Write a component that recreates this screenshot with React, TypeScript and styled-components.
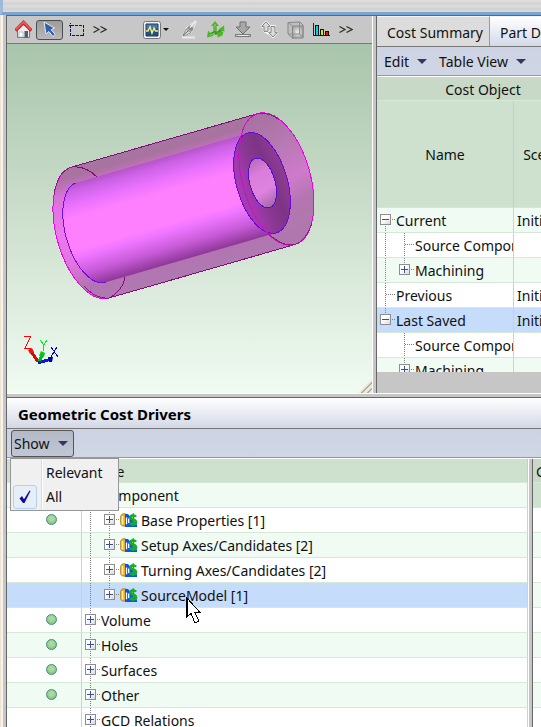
import React from "react";
import styled, { createGlobalStyle, css } from "styled-components";

const GlobalStyle = createGlobalStyle`
  * { box-sizing: border-box; }
  body { margin: 0; overflow: hidden; background: #fff; }
  body, button, table { font-family: "Noto Sans", "Open Sans", sans-serif; font-size: 14px; line-height: 20px; color: #111; }
  button { margin: 0; padding: 0; border: 0; background: none; cursor: default; }
  svg { display: block; flex: none; }
`;

/* ---------- window frame ---------- */

const Shell = styled.div`
  display: flex;
  flex-direction: column;
  height: 100vh;
  overflow: hidden;
`;

const TitleBand = styled.div`
  flex: none;
  height: 15px;
  border-left: 3px solid #9dbadd;
  border-bottom: 3px solid #7ba3d3;
  background: linear-gradient(#e0e0e0, #d3d3d3 30%, #dcdcdc 50%, #d2d2d2 75%, #dadada);
`;

const Body = styled.div`
  flex: 1;
  display: flex;
  min-height: 0;
`;

const LeftEdge = styled.div`
  flex: none;
  width: 7px;
  border-right: 1px solid #666;
  background: linear-gradient(90deg, #efe4cb 0 1px, #f4f4f4 1px 3px, #c6c6c6 3px 6px);
`;

const Main = styled.main`
  flex: 1;
  min-width: 0;
  display: flex;
  flex-direction: column;
  border-top: 1px solid #666;
`;

const TopSplit = styled.div`
  flex: none;
  display: grid;
  grid-template-columns: minmax(0, 365fr) 5px minmax(0, 164fr);
`;

const BottomSplit = styled.div`
  flex: 1;
  min-height: 0;
  overflow: hidden;
  display: grid;
  grid-template-columns: minmax(0, 521fr) 5px minmax(0, 8fr);
`;

const VerticalSplitter = styled.div`
  border-left: 1px solid #fff;
  border-right: 1px solid #666;
  background: #c6c6c6;
`;

const HorizontalSplitter = styled.div`
  flex: none;
  height: 5px;
  border-top: 1px solid #fff;
  border-bottom: 1px solid #666;
  background: #c6c6c6;
`;

const Pane = styled.section`
  min-width: 0;
  display: flex;
  flex-direction: column;
`;

/* ---------- model view ---------- */

const IconBar = styled.div`
  display: flex;
  align-items: center;
  height: 28px;
  padding: 0 8px;
  border-bottom: 1px solid #777;
  background: #c7c7c7;
`;

const IconButton = styled.button<{ $gap?: number; $pressed?: boolean }>`
  display: flex;
  align-items: center;
  justify-content: center;
  height: 20px;
  margin-left: ${(p) => p.$gap ?? 9}px;
  ${(p) =>
    p.$pressed &&
    css`
      width: 27px;
      border: 1px solid #4d4d4d;
      border-radius: 3px;
      background: linear-gradient(#9c9c9c, #b8b8b8);
    `}
`;

const Viewport = styled.div`
  position: relative;
  height: 349px;
  background: linear-gradient(#a9c5ab, #cddfcd 50%, #f0fbf2);
`;

const Scene = styled.svg`
  width: 365px;
  height: 349px;
`;

const Grip = styled.div`
  position: absolute;
  right: 0;
  bottom: 0;
  width: 14px;
  height: 14px;
  background: repeating-linear-gradient(135deg, #b3ada0 0 1px, #ece9dc 1px 4px);
  clip-path: polygon(100% 0, 100% 100%, 0 100%);
`;

/* ---------- tabs, menus, headings ---------- */

const Tabs = styled.div`
  display: flex;
  height: 31px;
  overflow: hidden;
  border-bottom: 1px solid #777;
`;

const Tab = styled.button<{ $selected?: boolean }>`
  flex: none;
  padding: 3px 6px 0 10px;
  white-space: nowrap;
  border-top: 1px solid #f4f4f4;
  border-right: 1px solid #999;
  background: ${(p) => (p.$selected ? "#dcdcdc" : "linear-gradient(#fff, #d3d9e7)")};
`;

const MenuBar = styled.div`
  position: relative;
  flex: none;
  display: flex;
  align-items: center;
  gap: 12px;
  height: 30px;
  padding: 0 7px;
  border-bottom: 1px solid #fff;
  box-shadow: inset 0 -1px #999;
  background: linear-gradient(#cdd3e2, #cfd6e4);
`;

const MenuButton = styled.button`
  display: flex;
  align-items: center;
  gap: 8px;
  white-space: nowrap;
`;

const ShowBar = styled(MenuBar)`
  padding: 0 4px;
`;

const ShowButton = styled(MenuButton)`
  height: 27px;
  padding: 0 5px 0 2px;
  border: 1px solid #555;
  border-radius: 3px;
  background: linear-gradient(#b4b9c6, #c0c6d4);
`;

const Popup = styled.div`
  position: absolute;
  z-index: 2;
  top: 29px;
  left: 3px;
  width: 109px;
  padding: 2px 2px 1px;
  border: 1px solid #979797;
  background: linear-gradient(90deg, #f0f0f0 30px, #dcdcdc 30px 31px, #fff 31px 32px, #f0f0f0 32px);
`;

const PopupItem = styled.button`
  display: grid;
  grid-template-columns: 24px 1fr;
  column-gap: 9px;
  align-items: center;
  width: 100%;
  height: 24px;
  text-align: left;
`;

const CheckSlot = styled.span<{ $on?: boolean }>`
  display: flex;
  align-items: center;
  justify-content: center;
  height: 24px;
  border: 1px solid ${(p) => (p.$on ? "#b0d0f5" : "transparent")};
  border-radius: 3px;
  background: ${(p) => (p.$on ? "#e6eff8" : "transparent")};
`;

const Heading = styled.h2`
  flex: none;
  height: 31px;
  margin: 0;
  padding: 6px 11px 0;
  overflow: hidden;
  white-space: nowrap;
  font-size: 15px;
  line-height: 20px;
  color: #000;
  border-bottom: 1px solid #777;
  background: linear-gradient(#fff, #d2d8e5);
`;

/* ---------- tables ---------- */

const TableArea = styled.div<{ $height?: number }>`
  ${(p) => (p.$height ? `height: ${p.$height}px;` : "flex: 1;")}
  overflow: hidden;
`;

const EmptyStrip = styled.div`
  flex: 1;
  background: #c6c6c6;
`;

const Grid = styled.table<{ $width?: number }>`
  width: ${(p) => (p.$width ? `${p.$width}px` : "100%")};
  table-layout: fixed;
  border-collapse: separate;
  border-spacing: 0;
`;

const HeadCell = styled.th<{ $height: number; $align?: string; $group?: boolean }>`
  height: ${(p) => p.$height}px;
  padding: 2px 3px 0;
  overflow: hidden;
  font-weight: 400;
  text-align: ${(p) => p.$align ?? "center"};
  border-right: 1px solid #bdd2bf;
  border-bottom: 1px solid #d5e8d6;
  background: ${(p) => (p.$group ? "#c9d9c8" : "#cde1ce")};
`;

const Row = styled.tr<{ $selected?: boolean; $striped?: boolean }>`
  background: ${(p) => (p.$selected ? "#c6dcfb" : p.$striped ? "#f0fbf3" : "#fff")};
`;

const Cell = styled.td`
  height: 25px;
  padding: 0;
  overflow: hidden;
  white-space: nowrap;
  border-right: 1px solid #c3d8c6;
  border-bottom: 1px solid #d5ead6;
`;

const ValueText = styled.span`
  display: block;
  height: 24px;
  padding-left: 3px;
  line-height: 26px;
`;

const TreeLine = styled.div`
  display: flex;
  height: 24px;
  line-height: 26px;
`;

const dotsDown = "repeating-linear-gradient(#808080 0 1px, transparent 1px 2px)";
const dotsAcross = "repeating-linear-gradient(90deg, #808080 0 1px, transparent 1px 2px)";

const Guide = styled.span<{ $up?: boolean; $down?: boolean; $across?: boolean }>`
  flex: none;
  width: 19px;
  height: 24px;
  padding: 6px 0 0 3px;
  background-repeat: no-repeat;
  background-image: ${dotsDown}, ${dotsDown}, ${dotsAcross};
  background-position: 8px 0, 8px 12px, 9px 11px;
  background-size: ${(p) => (p.$up ? "1px 12px" : "0 0")}, ${(p) => (p.$down ? "1px 12px" : "0 0")},
    ${(p) => (p.$across ? "9px 1px" : "0 0")};
`;

const Toggle = styled.button`
  display: flex;
  align-items: center;
  justify-content: center;
  width: 11px;
  height: 11px;
  border: 1px solid #8e8e8e;
  background: linear-gradient(135deg, #fff 40%, #d9d9d9);
`;

const DriverSlot = styled.span`
  width: 21px;
  padding-top: 5px;
`;

const StatusDot = styled.span`
  display: block;
  width: 11px;
  height: 11px;
  margin: 0 auto 2px 39px;
  border: 1px solid #449069;
  border-radius: 50%;
  background: radial-gradient(circle at 50% 40%, #a9d8a0 30%, #6bb583);
`;

const Pointer = styled.svg`
  position: absolute;
  z-index: 3;
  left: 185px;
  top: 596px;
`;

/* ---------- icons ---------- */

const Caret = ({ w = 10, color = "#3a3560" }: { w?: number; color?: string }) => (
  <svg width={w} height={w / 2} viewBox="0 0 10 5">
    <path d="M0 0h10L5 5z" fill={color} />
  </svg>
);

const Chevrons = () => (
  <svg width="14" height="9" viewBox="0 0 14 9" fill="none" stroke="#2a2a2a" strokeWidth="1.2">
    <path d="M.5 1.500l5.500 3L.5 7.500M7.500 1.500l5.500 3-5.500 3" />
  </svg>
);

const HomeIcon = () => (
  <svg width="17" height="19" viewBox="0 0 17 19">
    <path d="M2.500 9v8.500h12V9L8.500 4z" fill="#eee" stroke="#777" />
    <path d="M4 12h4v5H4z" fill="#fff" stroke="#aaa" strokeWidth=".7" />
    <path d="M9.500 11h3.500v6.500H9.500z" fill="#555b70" />
    <path d="M.6 10.500L8.500 2.500l7.900 8" fill="none" stroke="#c92027" strokeWidth="3.400" />
    <path d="M1 9.500L8.500 2l7.500 7.500" fill="none" stroke="#f35558" strokeWidth="1.800" />
  </svg>
);

const ArrowIcon = () => (
  <svg width="15" height="17" viewBox="0 0 15 17">
    <path d="M2 1l10.500 6-3.300 1.700 4 4.800-2.400 2-3.900-5L4 13z" fill="#2e62ae" stroke="#f2eadf" strokeWidth="1" />
  </svg>
);

const MarqueeIcon = () => (
  <svg width="15" height="14" viewBox="0 0 15 14" shapeRendering="crispEdges">
    <path d="M1.500 2.500h13v10h-13z" fill="none" stroke="#10106c" strokeDasharray="3 1" />
    <path d="M0 2.500h4M1.500 0v4" stroke="#10106c" strokeDasharray="1 1" />
  </svg>
);

const MonitorIcon = () => (
  <svg width="18" height="18" viewBox="0 0 18 18">
    <rect x=".5" y=".5" width="17" height="17" rx="2" fill="#f4f2ee" stroke="#777" />
    <path d="M3 3h12v12H3z" fill="#225083" stroke="#173a66" />
    <path d="M3.500 3.500h11v5c-4-2-7-2-11 1z" fill="#4478a8" />
    <path d="M3 10h2l2-4 2 6 2-5 1.500 3H15" fill="none" stroke="#f5ee83" strokeWidth="1.500" />
  </svg>
);

const PenIcon = () => (
  <svg width="16" height="19" viewBox="0 0 16 19">
    <path d="M1 17.500h13" stroke="#e9e9e9" strokeWidth="2" />
    <path d="M1.500 15.500L5 8 14.500.7 15.300 2 11 12l-6.500 3.500z" fill="#c4c4c4" stroke="#f2f2f2" strokeWidth=".8" />
    <path d="M2 15.500l3-6.500 5 3.500-5 2.700z" fill="#d9d9d9" stroke="#808080" strokeWidth=".8" />
    <path d="M2 15.500l5.500-5" stroke="#666" />
    <path d="M6 8l5 3.700 1.500-3.500L9 5z" fill="#8a8a8a" />
    <path d="M9 7.500L14.500 1.500" stroke="#eee" strokeWidth="1.500" />
  </svg>
);

const AxesIcon = () => (
  <svg width="19" height="18" viewBox="0 0 19 18">
    <path d="M9 11V3M9 11l-6 3.500M9 12.500c3 0 5-2 7-5" fill="none" stroke="#389a1e" strokeWidth="3" />
    <path d="M9 0l4 5H5zM1 16.500l1-7 5.500 5.500zM18 4.500l.5 6-6-2zM7 12l4.500-1v5.500l5-2 1-4" fill="#4fb52a" />
    <path d="M9 10V3M8.500 12L4 14.500" stroke="#84da58" strokeWidth="1" />
  </svg>
);

const DownloadIcon = () => (
  <svg width="18" height="17" viewBox="0 0 18 17">
    <path d="M6 1h6v5h4l-7 7-7-7h4z" fill="#a8a8a8" stroke="#707070" />
    <path d="M1.500 13.500h15v2h-15z" fill="#c9c9c9" stroke="#777" />
    <path d="M4 14.500h10" stroke="#eee" />
  </svg>
);

const SwapIcon = () => (
  <svg width="17" height="17" viewBox="0 0 17 17" fill="#dadada" strokeLinejoin="round">
    <path d="M5 .8l4.300 4.600H7v5H9.500L7.500 12.500 3 10V5.400H.8z" stroke="#f8f8f8" strokeWidth="2.200" />
    <path d="M5 .8l4.300 4.600H7v5H3v-5H.8z" stroke="#838383" />
    <path d="M12 16l-4.300-4.600H10V5h4v6.400h2.300z" stroke="#f8f8f8" strokeWidth="2" />
    <path d="M12 16l-4.300-4.600H10V5.500h4v5.900h2.300z" stroke="#838383" />
  </svg>
);

const CubeIcon = () => (
  <svg width="17" height="18" viewBox="0 0 17 18">
    <defs>
      <radialGradient id="cube-face">
        <stop offset="0" stopColor="#eee" />
        <stop offset="1" stopColor="#aaa" />
      </radialGradient>
    </defs>
    <path d="M1 1.500l12-.5 3 3v12l-10.500 1L1 13z" fill="#bfbfbf" stroke="#858585" />
    <path d="M5.500 5H16v12H5.500z" fill="url(#cube-face)" stroke="#858585" />
    <path d="M1 1.500L5.500 5M1 13h11.500V1M12.500 13L16 16.500" fill="none" stroke="#909090" />
  </svg>
);

const BarsIcon = () => (
  <svg width="17" height="14" viewBox="0 0 17 14" shapeRendering="crispEdges">
    <path d="M.5 0v12.500H17" fill="none" stroke="#222" />
    <path d="M2.500 2.500h3v10h-3z" fill="#00d5f5" stroke="#111" />
    <path d="M7.500 6.500h3v6h-3z" fill="#c8f000" stroke="#111" />
    <path d="M12.500 8.500h3v4h-3z" fill="#ef1313" stroke="#111" />
  </svg>
);

const DriverIcon = () => (
  <svg width="18" height="14" viewBox="0 0 18 14">
    <path d="M.6 4c0-4.500 7-4.500 7 0v6.500c0 3.500-7 3.500-7 0z" fill="#e8ae32" stroke="#a87818" strokeWidth=".8" />
    <path d="M2.500 3v8.500" stroke="#fff3a0" strokeWidth="1.600" />
    <path d="M5 1h3l9 10.500V14H5z" fill="#0b55ef" />
    <path d="M6.500 4.500v6.800M8.700 5.500v4.500" stroke="#fff" strokeWidth="1.300" />
    <path d="M16 3.800c-1.500-2-5.500-1.600-5.500.6s5.500 2 5.500 4.600-4.200 3-6 1" fill="none" stroke="#17ad27" strokeWidth="2.700" />
    <path d="M13.300.3v12.500" stroke="#17ad27" strokeWidth="1.600" />
  </svg>
);

const CheckIcon = () => (
  <svg width="12" height="14" viewBox="0 0 12 14">
    <path d="M.5 8.500L3 6l2 3.300L10.500.5 11.500 1 5.500 13H4z" fill="#100ba0" />
  </svg>
);

/* ---------- drawing of the part ---------- */

const PartDrawing = () => (
  <Scene viewBox="7 44 365 349" role="img" aria-label="Hollow cylinder part">
    <defs>
      <linearGradient id="stock" gradientUnits="userSpaceOnUse" x1="165" y1="140" x2="202" y2="271">
        <stop offset="0" stopColor="#a5779f" />
        <stop offset=".07" stopColor="#a9729f" />
        <stop offset=".2" stopColor="#da72dc" />
        <stop offset=".45" stopColor="#ee78ef" />
        <stop offset=".7" stopColor="#e174df" />
        <stop offset=".87" stopColor="#b374b4" />
        <stop offset="1" stopColor="#ae7aaf" />
      </linearGradient>
      <linearGradient id="cap" gradientUnits="userSpaceOnUse" x1="258" y1="114" x2="295" y2="245">
        <stop offset="0" stopColor="#a5719e" />
        <stop offset=".3" stopColor="#b779b3" />
        <stop offset=".55" stopColor="#cf7acb" />
        <stop offset=".72" stopColor="#b475b0" />
        <stop offset="1" stopColor="#ad79ab" />
      </linearGradient>
      <linearGradient id="core" gradientUnits="userSpaceOnUse" x1="162" y1="158" x2="191" y2="258">
        <stop offset="0" stopColor="#b653c9" />
        <stop offset=".07" stopColor="#cd62e6" />
        <stop offset=".2" stopColor="#ea72ff" />
        <stop offset=".32" stopColor="#ff80ff" />
        <stop offset=".62" stopColor="#ff80ff" />
        <stop offset=".7" stopColor="#ee75ff" />
        <stop offset=".85" stopColor="#c85bd8" />
        <stop offset="1" stopColor="#8c3795" />
      </linearGradient>
      <linearGradient id="face" gradientUnits="userSpaceOnUse" x1="234" y1="196" x2="284" y2="176">
        <stop offset="0" stopColor="#ab3fba" />
        <stop offset=".3" stopColor="#a038aa" />
        <stop offset=".5" stopColor="#8a3893" />
        <stop offset=".75" stopColor="#7d3485" />
        <stop offset="1" stopColor="#8c3b93" />
      </linearGradient>
      <linearGradient id="bore" gradientUnits="userSpaceOnUse" x1="255" y1="158" x2="269" y2="208">
        <stop offset="0" stopColor="#b36bb7" />
        <stop offset=".3" stopColor="#da7ddb" />
        <stop offset=".65" stopColor="#df83e0" />
        <stop offset="1" stopColor="#a266a6" />
      </linearGradient>
    </defs>
    <path d="M72 167L258 113.500A34 68 -15.600 0 1 295 244.500L109 298A34 68 -15.600 0 1 72 167z" fill="url(#stock)" />
    <ellipse cx="276.500" cy="179" rx="34" ry="68" transform="rotate(-15.600 276.500 179)" fill="url(#cap)" />
    <path d="M76.400 182.700L247.400 133.200A25.400 51.900 -16 0 0 276.600 232.800L105.600 282.300A25.400 51.900 -16 0 1 76.400 182.700z" fill="url(#core)" />
    <ellipse cx="262" cy="183" rx="25.400" ry="51.900" transform="rotate(-16 262 183)" fill="#85398b" />
    <path d="M247.400 133.200A25.400 51.900 -16 0 0 276.600 232.800A25.400 51.900 -16 0 0 247.400 133.200z" fill="url(#face)" />
    <ellipse cx="262.500" cy="183" rx="12.600" ry="25.700" transform="rotate(-16 262.500 183)" fill="url(#bore)" />
    <g fill="none" shapeRendering="crispEdges">
      <path d="M72 167L258 113.500M109 298L295 244.500M72 167c9-1 17 2 25 10M125 277c-1 9-9 18-16 21" stroke="#87087f" />
      <path d="M72 167A34 68 -15.600 0 0 109 298" stroke="#f000ee" />
      <path d="M72 167c-11 3-16 14-18 28M84 286c7 8 16 13 25 12" stroke="#96108f" />
      <path d="M76.400 182.700A25.400 51.900 -16 0 0 105.600 282.300" stroke="#7908ee" />
      <ellipse cx="262" cy="183" rx="25.400" ry="51.900" transform="rotate(-16 262 183)" stroke="#6c08da" />
      <ellipse cx="262.500" cy="183" rx="12.600" ry="25.700" transform="rotate(-16 262.500 183)" stroke="#5a0cd5" />
      <path d="M258 113.500A34 68 -15.600 0 1 295 244.500" stroke="#f000ee" />
      <path d="M258 113.500A34 68 -15.600 0 0 295 244.500" stroke="#d906d2" />
      <path d="M258 113.500c7-1 14 1 21 6M312 223c-4 12-10 19-17 21.500-9 2-17-2-26-10" stroke="#96108f" />
    </g>
    <g fill="none" shapeRendering="crispEdges">
      <path d="M24 336h7l-6 12h6" stroke="#f00" />
      <path d="M40 340l4 5 3-5M43.500 345v6" stroke="#00ee20" />
      <path d="M51 347l7 10M57 347l-6 10" stroke="#0000c8" />
      <path d="M38 362l-7-11" stroke="#d00a0a" strokeWidth="3" />
      <path d="M39 362l3-7" stroke="#00b818" strokeWidth="3" />
      <path d="M38 363l13-4" stroke="#0818cc" strokeWidth="3" />
    </g>
    <path d="M28 350l4-2 2 4-4 2z" fill="#e01818" />
    <path d="M39 356l2-5 4 2-1 4z" fill="#00c81c" />
    <path d="M48 357l5 0-1 5-3 0z" fill="#0000a8" />
  </Scene>
);

/* ---------- tree data ---------- */

type Link = { up?: boolean; down?: boolean; across?: boolean; box?: "+" | "-" };
type TreeRow = {
  label: string;
  links: Link[];
  value?: string;
  selected?: boolean;
  dot?: boolean;
  driver?: boolean;
};

const pipe: Link = { up: true, down: true };
const blank: Link = {};
const tee: Link = { up: true, down: true, across: true };
const teeBox: Link = { up: true, down: true, across: true, box: "+" };
const endBox: Link = { up: true, across: true, box: "+" };

const costRows: TreeRow[] = [
  { label: "Current", links: [{ down: true, across: true, box: "-" }], value: "Initial" },
  { label: "Source Component", links: [pipe, tee] },
  { label: "Machining", links: [pipe, endBox] },
  { label: "Previous", links: [tee], value: "Initial" },
  { label: "Last Saved", links: [{ up: true, across: true, box: "-" }], value: "Initial", selected: true },
  { label: "Source Component", links: [blank, tee] },
  { label: "Machining", links: [blank, endBox] },
];

const driverRows: TreeRow[] = [
  { label: "Component", links: [{ down: true, across: true, box: "-" }] },
  { label: "Base Properties [1]", links: [pipe, teeBox], dot: true, driver: true },
  { label: "Setup Axes/Candidates [2]", links: [pipe, teeBox], driver: true },
  { label: "Turning Axes/Candidates [2]", links: [pipe, teeBox], driver: true },
  { label: "SourceModel [1]", links: [pipe, endBox], driver: true, selected: true },
  { label: "Volume", links: [teeBox], dot: true },
  { label: "Holes", links: [teeBox], dot: true },
  { label: "Surfaces", links: [teeBox], dot: true },
  { label: "Other", links: [teeBox], dot: true },
  { label: "GCD Relations", links: [teeBox] },
];

const TreeLabel = ({ row }: { row: TreeRow }) => (
  <TreeLine>
    {row.links.map((link, i) => (
      <Guide key={i} $up={link.up} $down={link.down} $across={link.across}>
        {link.box && (
          <Toggle aria-label={`${link.box === "+" ? "Expand" : "Collapse"} ${row.label}`}>
            <svg width="9" height="9" viewBox="0 0 9 9" stroke="#3950a0" shapeRendering="crispEdges">
              <path d={link.box === "+" ? "M1 4.500h7M4.500 1v7" : "M1 4.500h7"} />
            </svg>
          </Toggle>
        )}
      </Guide>
    ))}
    {row.driver && (
      <DriverSlot>
        <DriverIcon />
      </DriverSlot>
    )}
    <span>{row.label}</span>
  </TreeLine>
);

export default function App() {
  return (
    <Shell>
      <GlobalStyle />
      <TitleBand />
      <Body>
        <LeftEdge />
        <Main>
          <TopSplit>
            <Pane>
              <IconBar role="toolbar">
                <IconButton $gap={0} aria-label="Home"><HomeIcon /></IconButton>
                <IconButton $gap={4} $pressed aria-label="Select"><ArrowIcon /></IconButton>
                <IconButton $gap={6} aria-label="Box select"><MarqueeIcon /></IconButton>
                <IconButton aria-label="More selection tools"><Chevrons /></IconButton>
                <IconButton $gap={36} aria-label="Display"><MonitorIcon /></IconButton>
                <IconButton $gap={2} aria-label="Display options"><Caret w={6} color="#111" /></IconButton>
                <IconButton $gap={12} aria-label="Annotate"><PenIcon /></IconButton>
                <IconButton aria-label="Axes"><AxesIcon /></IconButton>
                <IconButton aria-label="Import"><DownloadIcon /></IconButton>
                <IconButton aria-label="Swap"><SwapIcon /></IconButton>
                <IconButton aria-label="Solid view"><CubeIcon /></IconButton>
                <IconButton aria-label="Chart"><BarsIcon /></IconButton>
                <IconButton aria-label="More tools"><Chevrons /></IconButton>
              </IconBar>
              <Viewport>
                <PartDrawing />
                <Grip />
              </Viewport>
            </Pane>
            <VerticalSplitter />
            <Pane>
              <Tabs role="tablist">
                <Tab role="tab" $selected aria-selected>Cost Summary</Tab>
                <Tab role="tab">Part Details</Tab>
              </Tabs>
              <MenuBar>
                <MenuButton>Edit <Caret /></MenuButton>
                <MenuButton>Table View <Caret /></MenuButton>
              </MenuBar>
              <TableArea $height={295}>
                <Grid $width={213}>
                  <colgroup>
                    <col width={137} />
                    <col />
                  </colgroup>
                  <thead>
                    <tr><HeadCell $height={24} $group colSpan={2}>Cost Object</HeadCell></tr>
                    <tr>
                      <HeadCell $height={107}>Name</HeadCell>
                      <HeadCell $height={107}>Scenario</HeadCell>
                    </tr>
                  </thead>
                  <tbody>
                    {costRows.map((row, i) => (
                      <Row key={i} $selected={row.selected} $striped={i % 2 === 0}>
                        <Cell><TreeLabel row={row} /></Cell>
                        <Cell><ValueText>{row.value}</ValueText></Cell>
                      </Row>
                    ))}
                  </tbody>
                </Grid>
              </TableArea>
              <EmptyStrip />
            </Pane>
          </TopSplit>
          <HorizontalSplitter />
          <Heading>Geometric Cost Drivers</Heading>
          <ShowBar>
            <ShowButton aria-haspopup="menu" aria-expanded>Show <Caret /></ShowButton>
            <Popup role="menu">
              <PopupItem role="menuitemcheckbox" aria-checked={false}><CheckSlot />Relevant</PopupItem>
              <PopupItem role="menuitemcheckbox" aria-checked><CheckSlot $on><CheckIcon /></CheckSlot>All</PopupItem>
            </Popup>
          </ShowBar>
          <BottomSplit>
            <TableArea>
              <Grid>
                <colgroup>
                  <col width={75} />
                  <col />
                </colgroup>
                <thead>
                  <tr>
                    <HeadCell $height={24} />
                    <HeadCell $height={24} $align="left">Name</HeadCell>
                  </tr>
                </thead>
                <tbody>
                  {driverRows.map((row, i) => (
                    <Row key={i} $selected={row.selected} $striped={i % 2 === 0}>
                      <Cell>{row.dot && <StatusDot />}</Cell>
                      <Cell><TreeLabel row={row} /></Cell>
                    </Row>
                  ))}
                </tbody>
              </Grid>
            </TableArea>
            <VerticalSplitter />
            <TableArea>
              <Grid $width={90}>
                <thead>
                  <tr><HeadCell $height={24} $group $align="left">GCD</HeadCell></tr>
                  <tr><HeadCell $height={25} /></tr>
                </thead>
                <tbody>
                  {driverRows.slice(1).map((_, i) => (
                    <Row key={i} $striped={i % 2 === 1}><Cell /></Row>
                  ))}
                </tbody>
              </Grid>
            </TableArea>
          </BottomSplit>
        </Main>
      </Body>
      <Pointer width="16" height="29" viewBox="0 0 16 29" shapeRendering="crispEdges">
        <path d="M1.500 1.500v20l4.500-4 4 9.500 4-2-4-8.500h5z" fill="#fff" stroke="#000" />
        <path d="M2 3v18" stroke="#000" />
      </Pointer>
    </Shell>
  );
}
